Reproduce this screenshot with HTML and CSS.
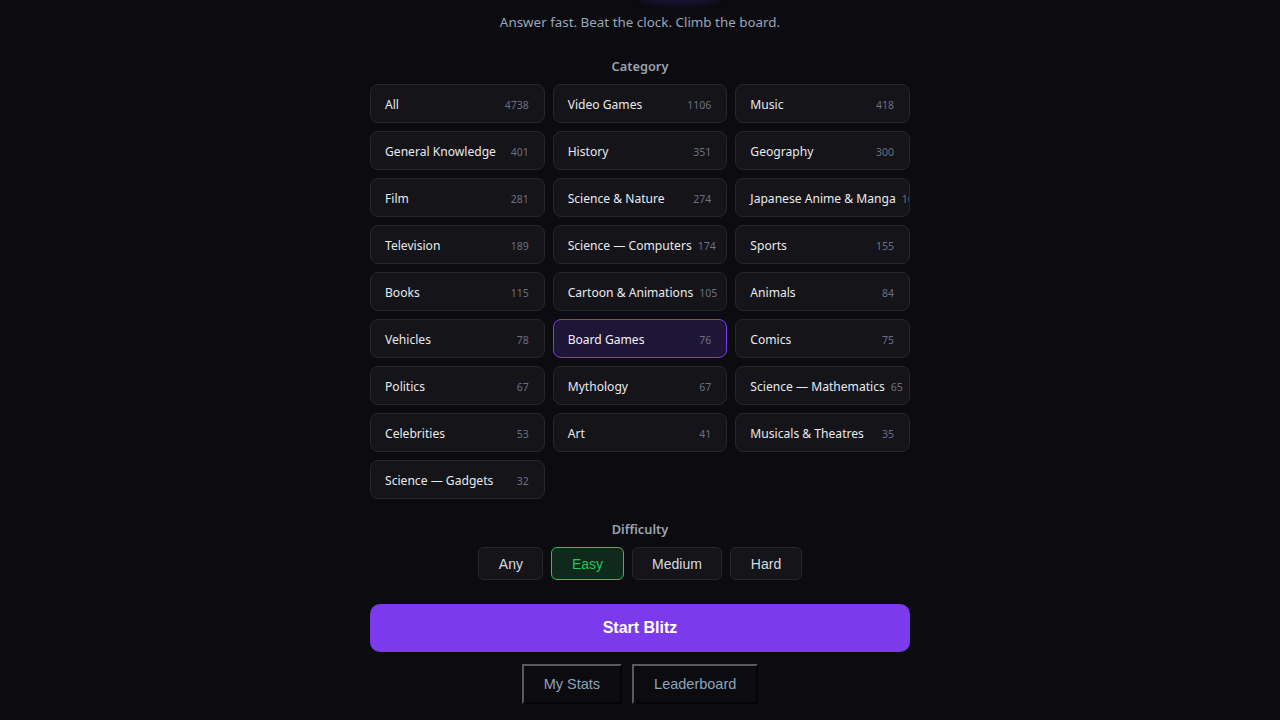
FILE: index.html
```html
<!DOCTYPE html>
<html lang="en">
<head>
<meta charset="utf-8">
<title>Trivia Blitz</title>
<link rel="stylesheet" href="styles.css">
</head>
<body>
<main class="page">
  <div class="glow"></div>
  <p class="subtitle">Answer fast. Beat the clock. Climb the board.</p>

  <h2 class="label label-category">Category</h2>
  <div class="grid">
    <button class="cat"><span class="name">All</span><span class="count">4738</span></button>
    <button class="cat"><span class="name">Video Games</span><span class="count">1106</span></button>
    <button class="cat"><span class="name">Music</span><span class="count">418</span></button>
    <button class="cat"><span class="name">General Knowledge</span><span class="count">401</span></button>
    <button class="cat"><span class="name">History</span><span class="count">351</span></button>
    <button class="cat"><span class="name">Geography</span><span class="count">300</span></button>
    <button class="cat"><span class="name">Film</span><span class="count">281</span></button>
    <button class="cat"><span class="name">Science &amp; Nature</span><span class="count">274</span></button>
    <button class="cat"><span class="name">Japanese Anime &amp; Manga</span><span class="count">163</span></button>
    <button class="cat"><span class="name">Television</span><span class="count">189</span></button>
    <button class="cat"><span class="name">Science — Computers</span><span class="count">174</span></button>
    <button class="cat"><span class="name">Sports</span><span class="count">155</span></button>
    <button class="cat"><span class="name">Books</span><span class="count">115</span></button>
    <button class="cat"><span class="name">Cartoon &amp; Animations</span><span class="count">105</span></button>
    <button class="cat"><span class="name">Animals</span><span class="count">84</span></button>
    <button class="cat"><span class="name">Vehicles</span><span class="count">78</span></button>
    <button class="cat selected"><span class="name">Board Games</span><span class="count">76</span></button>
    <button class="cat"><span class="name">Comics</span><span class="count">75</span></button>
    <button class="cat"><span class="name">Politics</span><span class="count">67</span></button>
    <button class="cat"><span class="name">Mythology</span><span class="count">67</span></button>
    <button class="cat"><span class="name">Science — Mathematics</span><span class="count">65</span></button>
    <button class="cat"><span class="name">Celebrities</span><span class="count">53</span></button>
    <button class="cat"><span class="name">Art</span><span class="count">41</span></button>
    <button class="cat"><span class="name">Musicals &amp; Theatres</span><span class="count">35</span></button>
    <button class="cat"><span class="name">Science — Gadgets</span><span class="count">32</span></button>
  </div>

  <h2 class="label label-difficulty">Difficulty</h2>
  <div class="diffs">
    <button class="diff">Any</button>
    <button class="diff active">Easy</button>
    <button class="diff">Medium</button>
    <button class="diff">Hard</button>
  </div>

  <button class="start">Start Blitz</button>

  <div class="links">
    <button class="link">My Stats</button>
    <button class="link">Leaderboard</button>
  </div>
</main>
</body>
</html>
```

FILE: styles.css
```css
html, body {
  margin: 0;
  padding: 0;
  background: #0b0b10;
}
body {
  font-family: "Noto Sans", "Open Sans", sans-serif;
  color: #e5e7eb;
  overflow: hidden;
}
.page {
  width: 540px;
  margin: 0 auto;
  display: flex;
  flex-direction: column;
  align-items: center;
  position: relative;
}
.glow {
  position: absolute;
  top: -12px;
  left: 270px;
  width: 80px;
  height: 14px;
  border-radius: 50%;
  background: rgba(90, 50, 190, 0.35);
  filter: blur(5px);
}
.subtitle {
  margin: 12px 0 0;
  font-size: 13.4px;
  line-height: 20px;
  color: #9aa6b8;
}
.label {
  margin: 0;
  font-size: 12.8px;
  line-height: 20px;
  font-weight: 600;
  color: #9aa3b0;
}
.label-category {
  margin-top: 24px;
}
.grid {
  margin-top: 8px;
  width: 100%;
  display: grid;
  grid-template-columns: repeat(3, 1fr);
  gap: 8px;
}
.cat {
  height: 39px;
  box-sizing: border-box;
  display: flex;
  align-items: center;
  justify-content: space-between;
  gap: 6px;
  padding: 2px 15px 0 14px;
  background: #141419;
  border: 1px solid #26262d;
  border-radius: 8px;
  overflow: hidden;
  white-space: nowrap;
  font-family: "Noto Sans", "Open Sans", sans-serif;
  cursor: pointer;
}
.name {
  font-size: 12.1px;
  color: #e8eaee;
}
.count {
  font-size: 10.5px;
  color: #6b7080;
}
.cat.selected {
  background: #1e1636;
  border-color: #7c3aed;
}
.cat.selected .name {
  color: #f3f0ff;
}
.label-difficulty {
  margin-top: 20px;
}
.diffs {
  margin-top: 8px;
  display: flex;
  gap: 8px;
}
.diff {
  height: 33px;
  box-sizing: border-box;
  padding: 0 19.5px;
  background: #141419;
  border: 1px solid #26262d;
  border-radius: 6px;
  font-family: "Liberation Sans", Arial, sans-serif;
  font-size: 14px;
  color: #d6dbe3;
}
.diff.active {
  background: #0f2a1d;
  border-color: #22c55e;
  color: #22c55e;
}
.start {
  margin-top: 24px;
  width: 100%;
  height: 48px;
  border: none;
  border-radius: 10px;
  background: #7c3aed;
  color: #ffffff;
  font-family: "Liberation Sans", Arial, sans-serif;
  font-size: 16px;
  font-weight: 700;
}
.links {
  margin-top: 12px;
  display: flex;
  gap: 10px;
}
.link {
  height: 40px;
  padding: 0 20px;
  background: #0b0b10;
  border: 2px outset #5a5a5a;
  font-family: "Liberation Sans", Arial, sans-serif;
  font-size: 14.5px;
  color: #8ea2b8;
}
```
